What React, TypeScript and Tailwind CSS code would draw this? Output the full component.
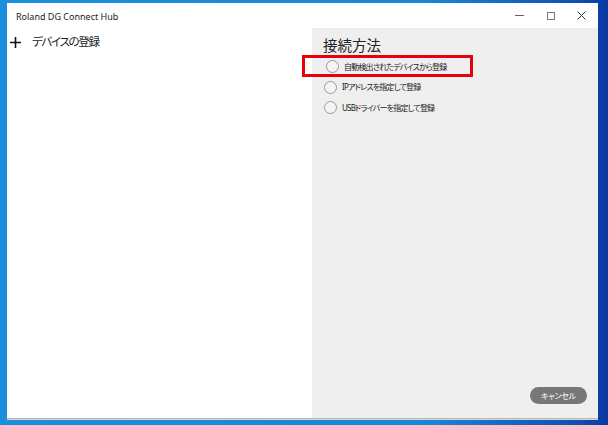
const options = [
  "自動検出されたデバイスから登録",
  "IPアドレスを指定して登録",
  "USBドライバーを指定して登録",
]

function Radio() {
  return <span className="block h-[13px] w-[13px] shrink-0 rounded-full border border-[#9a9a9a] bg-[#f4f4f4]" />
}

export default function App() {
  return (
    <div
      className="relative h-[425px] w-[608px] overflow-hidden bg-[linear-gradient(90deg,#1b8fdc_0%,#1a86d6_70%,#0f4fb4_95%,#0a38a3_100%)] pl-[7px] pt-[3px] [font-feature-settings:'palt']"
      style={{ fontFamily: '"Noto Sans", "Noto Sans CJK JP", sans-serif' }}
    >
      {/* window */}
      <div className="flex h-[415px] w-[591px] flex-col bg-white shadow-[0_1px_0_#b8b8b8,0_2px_0_#d4d4d4]">
        {/* title bar */}
        <div className="flex h-[25px] items-center justify-between">
          <span className="pl-[9px] pt-[3px] text-[9px] text-[#222]">Roland DG Connect Hub</span>
          <div className="flex h-full items-center text-[#444]">
            <div className="flex h-full w-[31px] items-center justify-center">
              <span className="block h-px w-[9px] bg-[#666]" />
            </div>
            <div className="flex h-full w-[31px] items-center justify-center">
              <span className="block h-[8px] w-[8px] border border-[#777]" />
            </div>
            <div className="flex h-full w-[32px] items-center justify-center pr-[2px]">
              <svg width="9" height="9" viewBox="0 0 9 9" stroke="#333" strokeWidth="1">
                <path d="M0.5 0.5 L8.5 8.5 M8.5 0.5 L0.5 8.5" />
              </svg>
            </div>
          </div>
        </div>

        <div className="flex flex-1">
          {/* left pane */}
          <div className="w-[305px]">
            <div className="flex items-center pl-[3px] pt-[6px]">
              <svg width="11" height="11" viewBox="0 0 11 11" stroke="#111" strokeWidth="1.6">
                <path d="M5.5 0 V11 M0 5.5 H11" />
              </svg>
              <span className="pl-[11px] text-[11.5px] leading-[16px] tracking-[-1.3px] text-[#222]">デバイスの登録</span>
            </div>
          </div>

          {/* right pane */}
          <div className="relative flex flex-1 flex-col bg-[#efefef] pl-[11px] pt-[7px]">
            <h2 className="text-[14.5px] leading-[20px] text-[#222]">接続方法</h2>
            <div className="mt-[5px] flex flex-col gap-[7.5px]">
              {options.map((o, i) => (
                <label key={o} className={`flex h-[13px] items-center gap-[5px] ${i === 0 ? "pl-[3px]" : "pl-[1px]"}`}>
                  <Radio />
                  <span className="text-[8px] leading-none tracking-[-0.8px] text-[#222]">{o}</span>
                </label>
              ))}
            </div>

            {/* annotation highlight */}
            <div className="absolute left-[-10px] top-[27px] h-[22px] w-[171px] border-[3px] border-[#e8000b]" />

            <div className="mt-auto flex justify-end pb-[14px] pr-[11px]">
              <button className="flex h-[17px] w-[57px] items-center justify-center rounded-full bg-[#777777] text-[8px] tracking-[-0.3px] text-white">
                キャンセル
              </button>
            </div>
          </div>
        </div>
      </div>
    </div>
  )
}
